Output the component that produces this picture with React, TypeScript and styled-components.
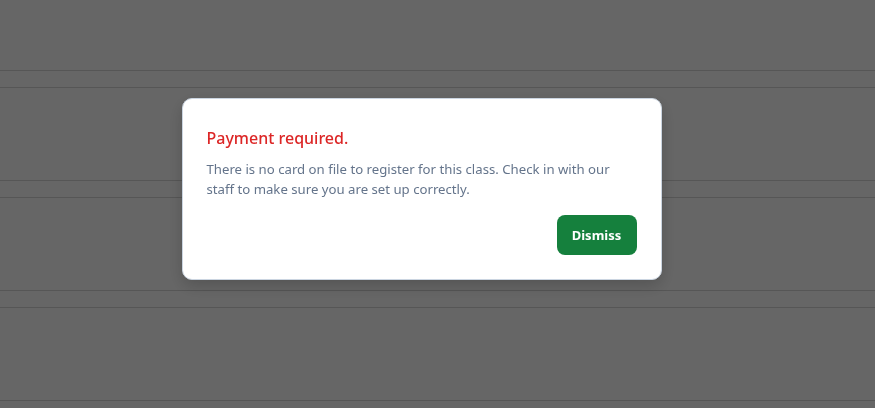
import React from "react";
import styled, { createGlobalStyle } from "styled-components";

const Global = createGlobalStyle`
  html, body { margin: 0; padding: 0; background: #ffffff; }
  body { font-family: "Noto Sans", "Open Sans", sans-serif; }
  * { box-sizing: border-box; }
`;

const Page = styled.div`
  display: flex;
  flex-direction: column;
  gap: 16px;
  width: 875px;
  height: 408px;
  overflow: hidden;
  background: #ffffff;
`;

const Header = styled.div`
  height: 71px;
  border-bottom: 1px solid #d6d6d6;
  flex-shrink: 0;
`;

const Card = styled.div`
  height: 94px;
  flex-shrink: 0;
  border-top: 1px solid #d6d6d6;
  border-bottom: 1px solid #d6d6d6;
`;

const Overlay = styled.div`
  position: fixed;
  inset: 0;
  background: rgba(0, 0, 0, 0.6);
  display: flex;
  align-items: center;
  justify-content: center;
  padding: 0 32px 31px 0;
`;

const Modal = styled.div`
  width: 480px;
  height: 182px;
  background: #ffffff;
  border: 1px solid #cbd5e1;
  border-radius: 10px;
  box-shadow: 0 6px 16px rgba(0, 0, 0, 0.18);
  padding: 27px 24px 24px 24px;
  display: flex;
  flex-direction: column;
`;

const Title = styled.h2`
  margin: 0;
  color: #dc2626;
  font-size: 16px;
  font-weight: 500;
  line-height: 24px;
`;

const Body = styled.p`
  margin: 9px 0 0 0;
  color: #64748b;
  font-size: 13.2px;
  line-height: 20px;
`;

const Actions = styled.div`
  margin-top: auto;
  display: flex;
  justify-content: flex-end;
`;

const Button = styled.button`
  width: 80px;
  height: 40px;
  border: none;
  border-radius: 8px;
  background: #15803d;
  color: #ffffff;
  font-family: "Noto Sans", "Open Sans", sans-serif;
  font-size: 13px;
  font-weight: 700;
  cursor: pointer;
`;

export default function App() {
  return (
    <>
      <Global />
      <Page>
        <Header />
        <Card />
        <Card />
        <Card />
      </Page>
      <Overlay>
        <Modal>
          <Title>Payment required.</Title>
          <Body>
            There is no card on file to register for this class. Check in with our
            staff to make sure you are set up correctly.
          </Body>
          <Actions>
            <Button>Dismiss</Button>
          </Actions>
        </Modal>
      </Overlay>
    </>
  );
}
